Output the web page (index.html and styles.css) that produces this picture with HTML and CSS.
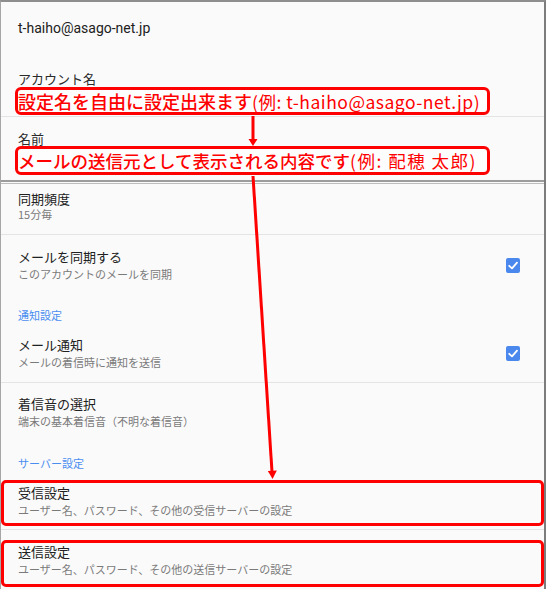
FILE: index.html
```html
<!DOCTYPE html>
<html lang="ja">
<head>
<meta charset="utf-8">
<link rel="stylesheet" href="styles.css">
</head>
<body>
<div class="frame">
  <div class="email">t-haiho@asago-net.jp</div>
  <div class="label label-account">アカウント名</div>
  <div class="note note-1"><span class="note-main">設定名を自由に設定出来ます</span><span class="note-ex">(例: t-haiho@asago-net.jp)</span></div>
  <div class="divider divider-top"></div>
  <div class="label label-name">名前</div>
  <div class="note note-2"><span class="note-main">メールの送信元として表示される内容です</span><span class="note-ex">(例: 配穂 太郎)</span></div>
  <div class="double-sep"></div>

  <div class="row row-sync-freq">
    <div class="texts">
      <div class="title title-tight">同期頻度</div>
      <div class="sub sub-tight">15分毎</div>
    </div>
  </div>
  <div class="divider"></div>

  <div class="row row-sync">
    <div class="texts">
      <div class="title">メールを同期する</div>
      <div class="sub">このアカウントのメールを同期</div>
    </div>
    <div class="check"><svg viewBox="0 0 14 15" width="14" height="15"><path d="M3.2 7.8 L6 10.4 L11 4.6" fill="none" stroke="#fff" stroke-width="1.8" stroke-linecap="round" stroke-linejoin="round"/></svg></div>
  </div>

  <div class="category cat-notify">通知設定</div>

  <div class="row row-notify">
    <div class="texts">
      <div class="title">メール通知</div>
      <div class="sub">メールの着信時に通知を送信</div>
    </div>
    <div class="check"><svg viewBox="0 0 14 15" width="14" height="15"><path d="M3.2 7.8 L6 10.4 L11 4.6" fill="none" stroke="#fff" stroke-width="1.8" stroke-linecap="round" stroke-linejoin="round"/></svg></div>
  </div>
  <div class="divider"></div>

  <div class="row row-ring">
    <div class="texts">
      <div class="title">着信音の選択</div>
      <div class="sub">端末の基本着信音（不明な着信音）</div>
    </div>
  </div>

  <div class="category cat-server">サーバー設定</div>

  <div class="row boxed boxed-in">
    <div class="texts">
      <div class="title">受信設定</div>
      <div class="sub">ユーザー名、パスワード、その他の受信サーバーの設定</div>
    </div>
  </div>
  <div class="divider divider-server"></div>
  <div class="row boxed boxed-out">
    <div class="texts">
      <div class="title">送信設定</div>
      <div class="sub">ユーザー名、パスワード、その他の送信サーバーの設定</div>
    </div>
  </div>

  <svg class="arrows" viewBox="0 0 546 589" width="546" height="589">
    <line x1="253" y1="116" x2="253" y2="140" stroke="#ff0000" stroke-width="3"/>
    <polygon points="248.5,139 257.5,139 253,146" fill="#ff0000"/>
    <line x1="253" y1="176" x2="272" y2="472" stroke="#ff0000" stroke-width="3"/>
    <polygon points="267.8,471 276.8,470.5 272.6,479" fill="#ff0000"/>
  </svg>
</div>
</body>
</html>
```

FILE: styles.css
```css
* { box-sizing: border-box; }
html, body { margin: 0; padding: 0; background: #fafafa; }
body {
  font-family: Roboto, "Noto Sans CJK JP", sans-serif;
  color: #212121;
}
.frame {
  position: relative;
  width: 546px;
  height: 589px;
  overflow: hidden;
  background: #fafafa;
  border-top: 2px solid #8e8e8e;
  border-left: 1px solid #a6a6a6;
  border-right: 2px solid #7c7c7c;
}
.email {
  margin-top: 16px;
  padding-left: 17px;
  font-size: 14px;
  line-height: 20px;
  color: #212121;
}
.label {
  padding-left: 17px;
  font-size: 13px;
  color: #2a2a2a;
  font-family: "Noto Sans CJK JP", sans-serif;
}
.label-account { margin-top: 33px; line-height: 16px; }
.label-name { margin-top: 15px; line-height: 14px; }

.note {
  margin-left: 14px;
  width: 475px;
  border: 3px solid #ff0000;
  border-radius: 6px;
  background: #fdfdfd;
  color: #ff0000;
  font-family: "Noto Sans CJK JP", sans-serif;
  font-size: 18px;
  white-space: nowrap;
  overflow: hidden;
}
.note-1 { height: 28px; line-height: 22px; }
.note-2 { height: 29px; line-height: 23px; }
.note-main { font-weight: 500; }
.note-2 .note-main { font-size: 17.5px; }
.note-ex { font-weight: 400; font-size: 17.5px; letter-spacing: 0.5px; }
.note-2 .note-ex { letter-spacing: 1.5px; }

.divider { height: 1px; background: #e4e4e4; }
.divider-top { margin-top: 1px; }

.double-sep {
  margin-top: 5px;
  height: 4px;
  border-top: 2px solid #9c9c9c;
  border-bottom: 1px solid #bdbdbd;
}

.row {
  display: flex;
  align-items: center;
  justify-content: space-between;
  padding-left: 17px;
  padding-right: 24px;
  font-family: "Noto Sans CJK JP", sans-serif;
}
.title { font-size: 13px; line-height: 18px; color: #212121; }
.sub { font-size: 11px; line-height: 16px; color: #7a7a7a; }
.title-tight { line-height: 16px; }
.sub-tight { line-height: 14px; }

.row-sync-freq { padding-top: 7px; padding-bottom: 13px; }
.row-sync { padding-top: 13px; }
.row-notify { padding-top: 13px; padding-bottom: 12px; }
.row-ring { padding-top: 12px; }

.category {
  padding-left: 17px;
  font-family: "Noto Sans CJK JP", sans-serif;
  font-size: 11px;
  line-height: 16px;
  color: #4a8ef0;
}
.cat-notify { margin-top: 25px; }
.cat-server { margin-top: 26px; }

.check {
  width: 14px;
  height: 15px;
  border-radius: 2px;
  background: #4a88ee;
  display: flex;
}

.boxed {
  border: 3px solid #ff0000;
  border-radius: 5px;
  padding-left: 14px;
}
.boxed-in { margin-top: 9px; padding-top: 1px; padding-bottom: 5px; }
.divider-server { margin-top: 3px; }
.boxed-out { margin-top: 10px; padding-top: 0; padding-bottom: 7px; }

.arrows {
  position: absolute;
  left: -1px;
  top: -2px;
  pointer-events: none;
}
```
